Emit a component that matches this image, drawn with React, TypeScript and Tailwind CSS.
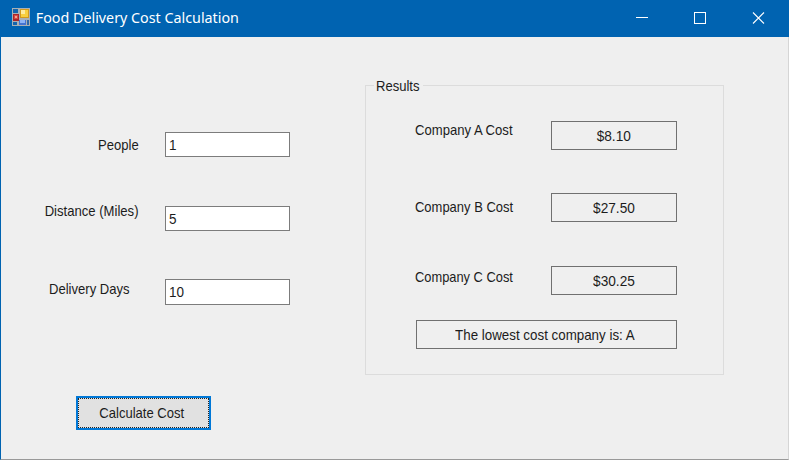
import React from "react";

const textBase =
  "block whitespace-nowrap text-[15px] leading-5 text-[#1c1c1c]";

function Text({ children, className = "" }: { children: React.ReactNode; className?: string }) {
  return <span className={`${textBase} ${className}`}>{children}</span>;
}

function AppIcon() {
  return (
    <svg width="18" height="18" viewBox="0 0 18 18" className="shrink-0">
      <rect width="18" height="18" fill="#a9b0b4" />
      <rect x="1" y="1" width="5" height="4" fill="#1565ad" />
      <rect x="1" y="14" width="4" height="3" fill="#1565ad" />
      <rect x="15" y="12" width="2" height="5" fill="#2e68a8" />
      <rect x="1" y="6" width="6" height="7" fill="#a8262b" />
      <rect x="2" y="7" width="4" height="4" fill="#d9483f" />
      <rect x="3" y="8" width="2" height="2" fill="#f3a08c" />
      <rect x="8" y="1" width="9" height="9" fill="#d29a1c" />
      <rect x="9" y="2" width="7" height="7" fill="#f8cf3c" />
      <rect x="9" y="2" width="4" height="4" fill="#fdeb9c" />
      <rect x="7" y="12" width="7" height="5" fill="#4474d2" />
      <rect x="8" y="12" width="5" height="3" fill="#8db5f6" />
    </svg>
  );
}

function TitleBar() {
  return (
    <header className="flex h-[37px] shrink-0 bg-[#0063b1] pl-3">
      <div className="flex h-[34px] items-center">
        <AppIcon />
        <h1 className="origin-left scale-x-[0.953] pl-1.5 font-['Noto_Sans',sans-serif] text-[15px] leading-5 whitespace-nowrap text-white">
          Food Delivery Cost Calculation
        </h1>
      </div>
      <div className="ml-auto flex h-full">
        <svg width="58" height="37" stroke="#fff" fill="none">
          <path d="M23 17.5h12" />
        </svg>
        <svg width="58" height="37" stroke="#fff" fill="none">
          <rect x="23.5" y="12.5" width="11" height="11" />
        </svg>
        <svg width="60" height="37" stroke="#fff" fill="none">
          <path d="M24 12.5l11 11M35 12.5l-11 11" strokeWidth="1.1" />
        </svg>
      </div>
    </header>
  );
}

function Field({ value, className = "" }: { value: string; className?: string }) {
  return (
    <div className={`w-[125px] overflow-hidden border border-[#7c7c7c] bg-white pl-[3px] ${className}`}>
      <input
        defaultValue={value}
        className="block h-[22px] w-[130px] origin-left scale-x-[0.9] bg-transparent text-[15px] leading-5 text-[#1c1c1c] outline-none"
      />
    </div>
  );
}

function Amount({ children, className = "" }: { children: React.ReactNode; className?: string }) {
  return (
    <output className={`flex h-[29px] w-[126px] items-center justify-center border border-[#707070] pr-px ${className}`}>
      <Text className="scale-x-[0.91]">{children}</Text>
    </output>
  );
}

export default function App() {
  return (
    <div className="flex h-[460px] w-[789px] flex-col overflow-hidden bg-[#efefef] font-['Liberation_Sans',Arial,sans-serif]">
      <TitleBar />
      <main className="flex grow border-b border-l border-r border-b-[#999] border-l-[#0063b1] border-r-[#d5d5d5]">
        <section className="w-[364px] shrink-0">
          <div className="flex h-[359px]">
            <div className="flex w-[138px] flex-col items-end pt-[98px]">
              <Text className="origin-right scale-x-[0.87]">People</Text>
              <Text className="mt-[46px] origin-right scale-x-[0.873]">Distance (Miles)</Text>
              <Text className="mt-[58px] mr-[9px] origin-right scale-x-[0.87]">Delivery Days</Text>
            </div>
            <div className="pt-[95px] pl-[26px]">
              <Field value="1" className="h-[25px]" />
              <Field value="5" className="mt-[49px] h-[25px]" />
              <Field value="10" className="mt-[48px] h-[26px]" />
            </div>
          </div>
          <button className="ml-[75px] block h-[34px] w-[135px] border-2 border-[#0078d7] bg-[#e1e1e1]">
            <span className="flex h-full items-center justify-center border border-dotted border-[#222] pr-1 outline-1 outline-[#0078d7]">
              <Text className="scale-x-[0.87]">Calculate Cost</Text>
            </span>
          </button>
        </section>

        <fieldset className="mt-[39px] h-[299px] w-[359px] border border-[#dcdcdc] pl-[49px]">
          <legend className="-ml-[41px] h-[18px] w-[49px] pl-[2px]">
            <Text className="origin-left scale-x-[0.87]">Results</Text>
          </legend>
          <div className="flex">
            <div className="w-[136px] pt-[26px]">
              <Text className="origin-left scale-x-[0.873]">Company A Cost</Text>
              <Text className="mt-[57px] origin-left scale-x-[0.865]">Company B Cost</Text>
              <Text className="mt-[50px] origin-left scale-x-[0.857]">Company C Cost</Text>
            </div>
            <div className="pt-[27px]">
              <Amount>$8.10</Amount>
              <Amount className="mt-[43px]">$27.50</Amount>
              <Amount className="mt-[44px]">$30.25</Amount>
            </div>
          </div>
          <output className="mt-[25px] ml-px flex h-[29px] w-[261px] items-center justify-center border border-[#707070] pr-[3px]">
            <Text className="scale-x-[0.89]">The lowest cost company is: A</Text>
          </output>
        </fieldset>
      </main>
    </div>
  );
}
